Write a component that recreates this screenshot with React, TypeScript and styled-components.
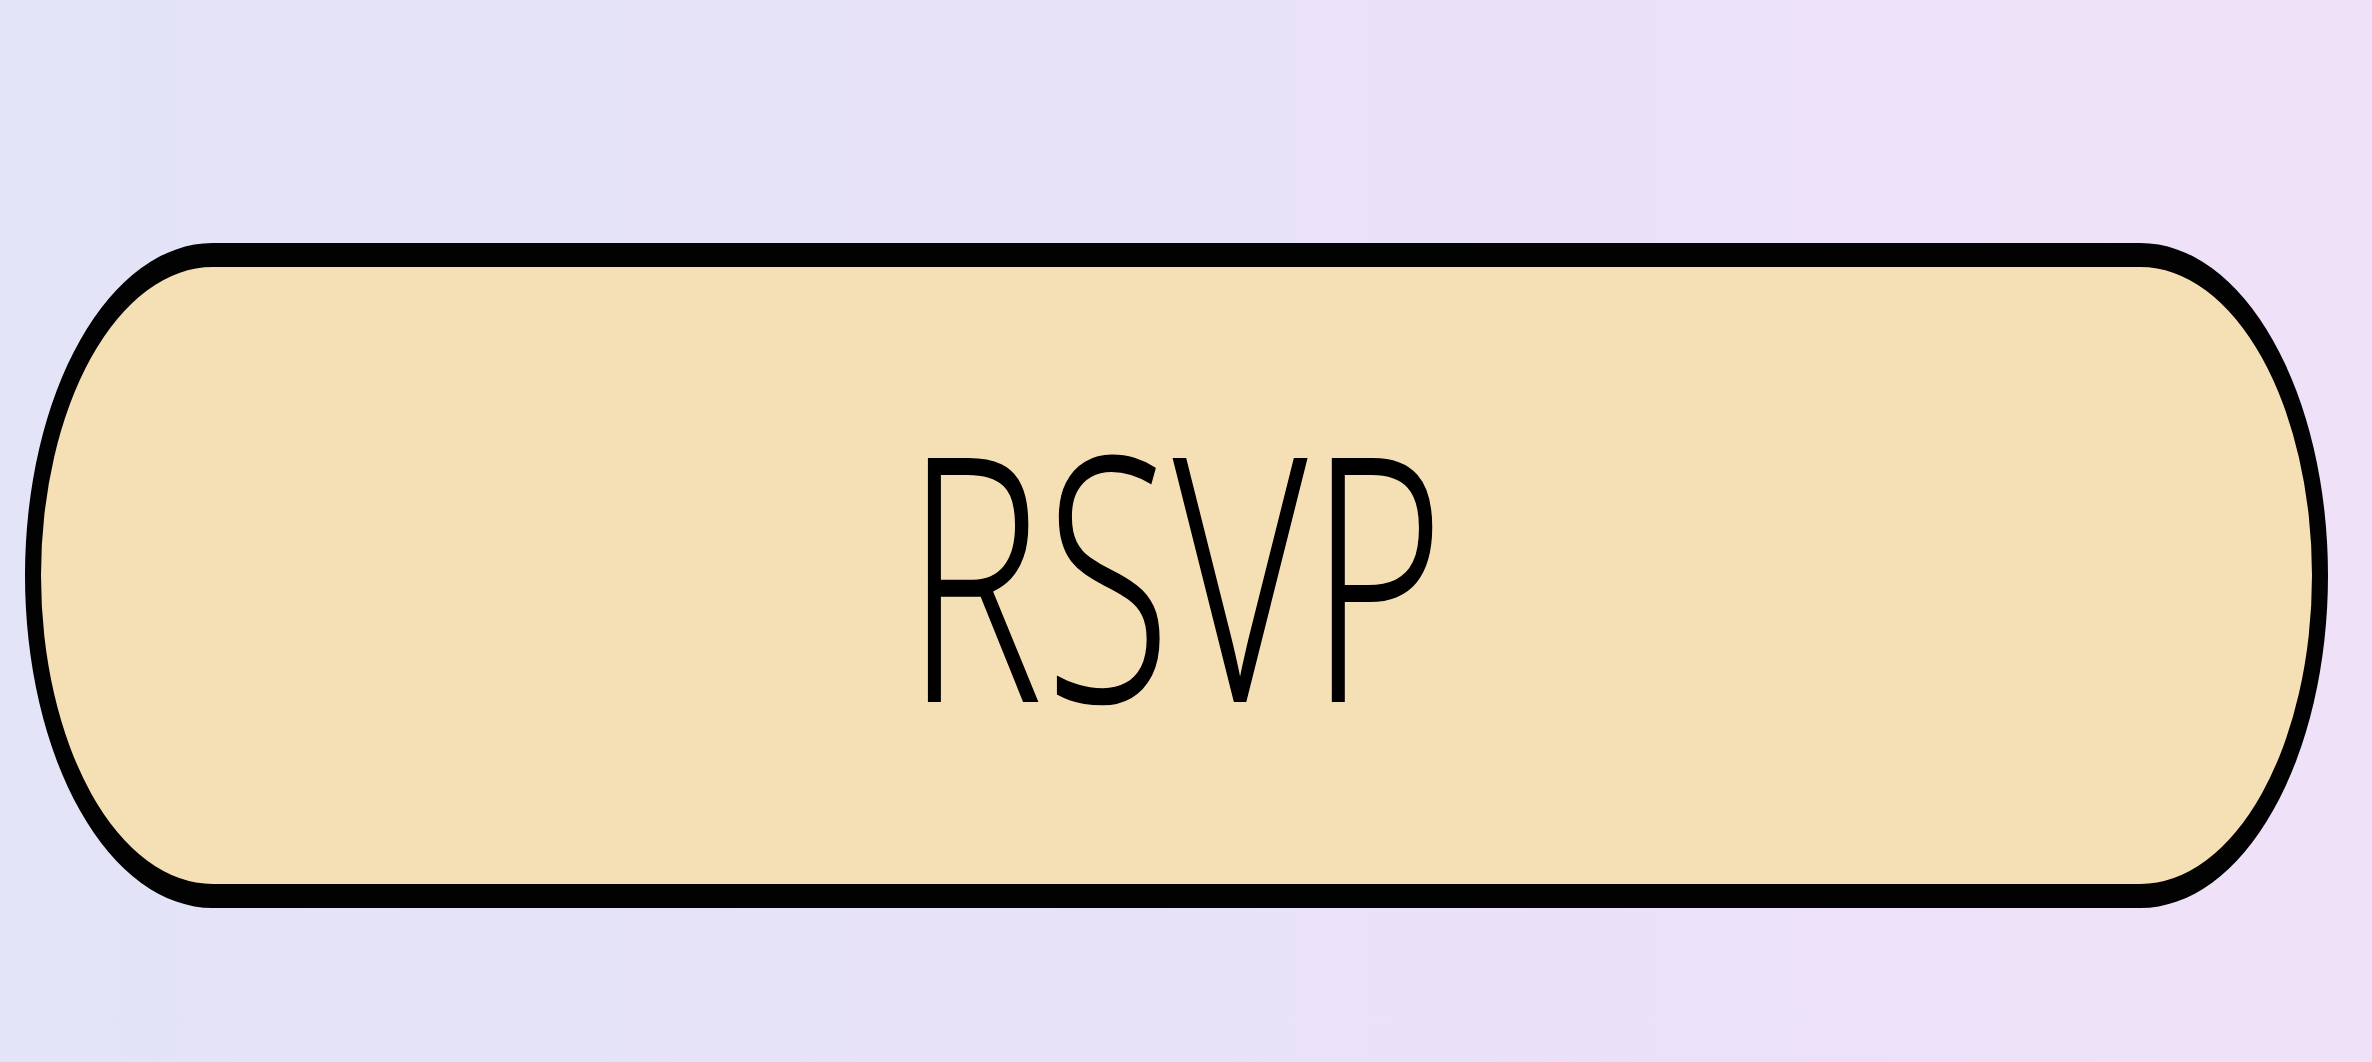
import React from 'react';
import styled, { createGlobalStyle } from 'styled-components';

const GlobalStyle = createGlobalStyle`
  html, body {
    margin: 0;
    padding: 0;
    height: 100%;
  }
  #root {
    height: 100%;
  }
`;

const Page = styled.div`
  box-sizing: border-box;
  width: 100%;
  height: 1062px;
  padding: 243px 44px 154px 25px;
  display: flex;
  align-items: stretch;
  background: linear-gradient(90deg, #e3e4f8 0%, #e9e2f8 55%, #efe1f8 100%);
  overflow: hidden;
`;

const RsvpButton = styled.button`
  flex: 1;
  box-sizing: border-box;
  display: flex;
  align-items: center;
  justify-content: center;
  padding: 0;
  border-style: solid;
  border-color: #020203;
  border-width: 24px 16px;
  border-radius: 188px / 333px;
  background: #f5dfb4;
  color: #000;
  cursor: pointer;
`;

const Label = styled.span`
  display: inline-block;
  font-family: 'Open Sans', 'Noto Sans', sans-serif;
  font-weight: 300;
  font-size: 339px;
  line-height: 1;
  letter-spacing: 4px;
  -webkit-text-stroke: 2px #000;
  transform: scaleX(0.68) translateY(-6px);
`;

export default function App() {
  return (
    <>
      <GlobalStyle />
      <Page>
        <RsvpButton type="button">
          <Label>RSVP</Label>
        </RsvpButton>
      </Page>
    </>
  );
}
